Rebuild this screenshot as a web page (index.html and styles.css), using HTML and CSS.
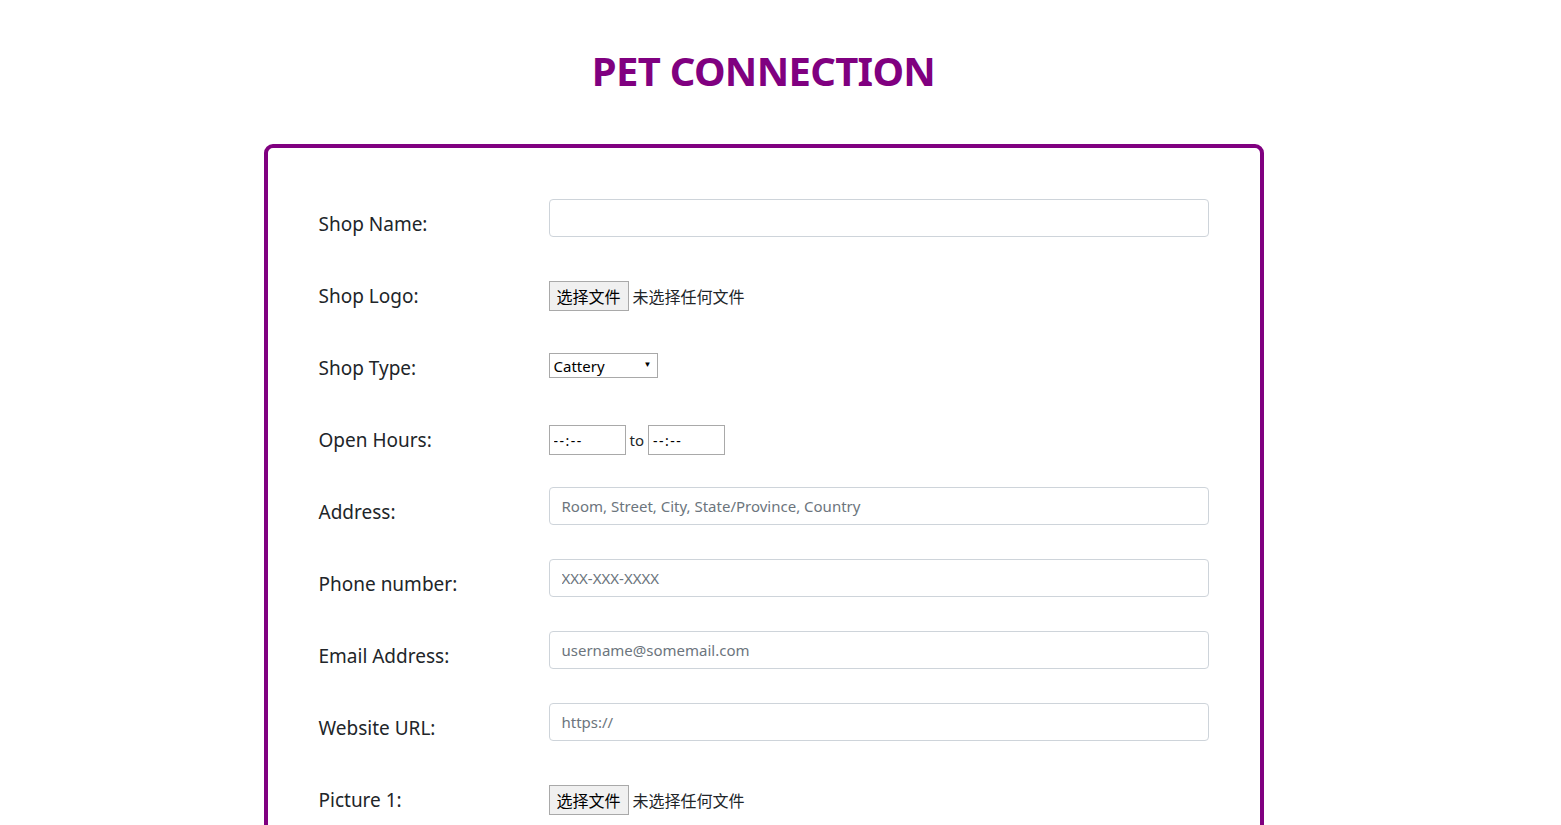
FILE: index.html
```html
<!DOCTYPE html>
<html lang="en">
<head>
<meta charset="utf-8">
<title>Pet Connection</title>
<link rel="stylesheet" href="styles.css">
</head>
<body>
<div class="page">
  <h1 class="title">PET CONNECTION</h1>
  <form class="card">
    <div class="row">
      <label class="label">Shop Name:</label>
      <input class="form-control" type="text">
    </div>
    <div class="row">
      <label class="label">Shop Logo:</label>
      <div class="control file">
        <span class="file-btn">选择文件</span>
        <span class="file-text">未选择任何文件</span>
      </div>
    </div>
    <div class="row">
      <label class="label">Shop Type:</label>
      <div class="control">
        <span class="select">Cattery<span class="arrow">▼</span></span>
      </div>
    </div>
    <div class="row">
      <label class="label">Open Hours:</label>
      <div class="control hours">
        <input class="time" type="text" value="--:--" readonly>
        <span class="to">to</span>
        <input class="time" type="text" value="--:--" readonly>
      </div>
    </div>
    <div class="row">
      <label class="label">Address:</label>
      <input class="form-control" type="text" placeholder="Room, Street, City, State/Province, Country">
    </div>
    <div class="row">
      <label class="label">Phone number:</label>
      <input class="form-control" type="text" placeholder="XXX-XXX-XXXX">
    </div>
    <div class="row">
      <label class="label">Email Address:</label>
      <input class="form-control" type="text" placeholder="username@somemail.com">
    </div>
    <div class="row">
      <label class="label">Website URL:</label>
      <input class="form-control" type="text" placeholder="https://">
    </div>
    <div class="row">
      <label class="label">Picture 1:</label>
      <div class="control file">
        <span class="file-btn">选择文件</span>
        <span class="file-text">未选择任何文件</span>
      </div>
    </div>
  </form>
</div>
</body>
</html>
```

FILE: styles.css
```css
html, body {
  margin: 0;
  padding: 0;
  background: #fff;
}
body {
  font-family: "Noto Sans", "Open Sans", sans-serif;
  color: #212529;
}
.page {
  width: 1000px;
  margin: 0 auto;
  position: relative;
  left: -17px;
}
.title {
  margin: 0;
  padding-top: 45px;
  height: 144px;
  box-sizing: border-box;
  text-align: center;
  color: #800080;
  font-size: 40px;
  line-height: 52px;
  font-weight: 700;
  letter-spacing: -0.7px;
}
.card {
  border: 4px solid #800080;
  border-radius: 9px;
  padding: 39px 51px 40px 51px;
  box-sizing: border-box;
}
.row {
  display: flex;
  align-items: flex-start;
  height: 72px;
}
.label {
  width: 230px;
  flex: none;
  padding-top: 22px;
  font-size: 19px;
  line-height: 30px;
}
.form-control {
  margin-top: 12px;
  width: 660px;
  height: 38px;
  box-sizing: border-box;
  border: 1px solid #ced4da;
  border-radius: 4px;
  padding: 6px 12px;
  font-family: inherit;
  font-size: 15px;
  color: #495057;
  outline: none;
}
.form-control::placeholder {
  color: #6c757d;
}
.control {
  margin-top: 22px;
  height: 30px;
  display: flex;
  align-items: center;
}
.file-btn {
  display: inline-flex;
  align-items: center;
  justify-content: center;
  width: 80px;
  height: 30px;
  box-sizing: border-box;
  border: 1px solid #a9a9a9;
  background: #f0f0f0;
  font-family: "Noto Sans CJK SC", sans-serif;
  font-size: 16px;
  color: #000;
}
.file-text {
  margin-left: 4px;
  font-family: "Noto Sans CJK SC", sans-serif;
  font-size: 16px;
  color: #212529;
}
.select {
  position: relative;
  display: inline-flex;
  align-items: center;
  width: 109px;
  height: 25px;
  box-sizing: border-box;
  border: 1px solid #a9a9a9;
  padding-left: 4px;
  font-size: 15px;
  color: #000;
  margin-top: -5px;
}
.arrow {
  position: absolute;
  right: 5px;
  top: 5px;
  font-size: 8px;
  line-height: 10px;
}
.time {
  width: 77px;
  height: 30px;
  box-sizing: border-box;
  border: 1px solid #a9a9a9;
  padding: 0 4px;
  font-family: inherit;
  font-size: 14px;
  letter-spacing: 1.5px;
  color: #000;
  outline: none;
}
.to {
  font-size: 15px;
  margin: 0 4px;
}
```
